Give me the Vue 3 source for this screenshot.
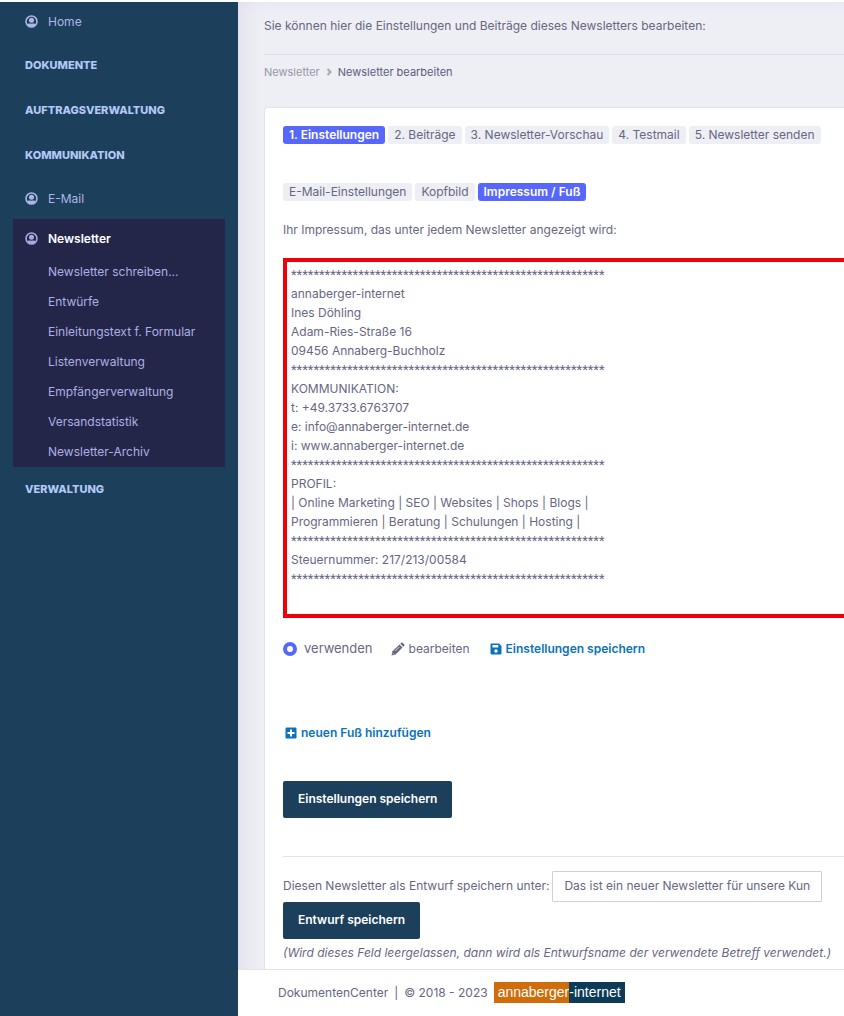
<template>
  <div class="page">
    <aside class="sidebar">
      <nav>
        <a href="#" class="nav-item home"><svg class="user-icon" viewBox="0 0 14 14"><circle cx="7" cy="7" r="5.9" /><circle cx="7" cy="5.6" r="2.7" /><path d="M2.4 10.2C4 8.7 5 9.4 7 9.4S10 8.7 11.6 10.2C9 13.6 5 13.6 2.4 10.2Z" /></svg>Home</a>
        <h4 v-for="title in sectionsTop" :key="title">{{ title }}</h4>
        <a href="#" class="nav-item"><svg class="user-icon" viewBox="0 0 14 14"><circle cx="7" cy="7" r="5.9" /><circle cx="7" cy="5.6" r="2.7" /><path d="M2.4 10.2C4 8.7 5 9.4 7 9.4S10 8.7 11.6 10.2C9 13.6 5 13.6 2.4 10.2Z" /></svg>E-Mail</a>
        <div class="nav-open">
          <a href="#" class="nav-item active"><svg class="user-icon" viewBox="0 0 14 14"><circle cx="7" cy="7" r="5.9" /><circle cx="7" cy="5.6" r="2.7" /><path d="M2.4 10.2C4 8.7 5 9.4 7 9.4S10 8.7 11.6 10.2C9 13.6 5 13.6 2.4 10.2Z" /></svg>Newsletter</a>
          <a v-for="item in subItems" :key="item" href="#" class="sub-item">{{ item }}</a>
        </div>
        <h4>VERWALTUNG</h4>
      </nav>
    </aside>

    <div class="content">
      <main>
        <p class="intro">Sie können hier die Einstellungen und Beiträge dieses Newsletters bearbeiten:</p>
        <div class="breadcrumb">
          <a href="#">Newsletter</a>
          <svg viewBox="0 0 6 8"><path d="M1.5 1L4.5 4L1.5 7" /></svg>
          <span>Newsletter bearbeiten</span>
        </div>

        <section class="card">
          <div class="tabs">
            <button v-for="(step, i) in steps" :key="step" :class="{ current: activeStep === i }" @click="activeStep = i">{{ step }}</button>
          </div>
          <div class="tabs tabs-sub">
            <button v-for="(tab, i) in tabs" :key="tab" :class="{ current: activeTab === i }" @click="activeTab = i">{{ tab }}</button>
          </div>

          <p class="hint">Ihr Impressum, das unter jedem Newsletter angezeigt wird:</p>

          <div class="imprint">
            <template v-for="(line, i) in imprint" :key="i">
              <div v-if="line === ''" class="stars">{{ stars }}</div>
              <div v-else>{{ line }}</div>
            </template>
          </div>

          <div class="actions">
            <label class="use"><input v-model="selected" type="radio" name="footer" value="default">verwenden</label>
            <a href="#" class="edit">
              <svg viewBox="0 0 14 14"><path d="M1.5 9.3L8.5 2.5L11.5 5.5L4.6 12.4L0.5 13.5Z" /><path d="M9.3 1.7L10.3 0.7Q11 0.2 11.6 0.7L13.3 2.4Q13.8 3 13.3 3.7L12.3 4.7Z" /><path class="cut" d="M4.2 9L8.4 4.8M1.8 11.2L2.8 12.2" /></svg>bearbeiten
            </a>
            <a href="#" class="link save">
              <svg viewBox="0 0 12 12"><path fill-rule="evenodd" d="M1.2 0.5H9L11.5 3V10.3Q11.5 11.5 10.3 11.5H1.7Q0.5 11.5 0.5 10.3V1.7Q0.5 0.5 1.2 0.5ZM2.5 2V4.6H8.3V2ZM6 6.3A1.7 1.7 0 1 0 6 9.7A1.7 1.7 0 1 0 6 6.3Z" /></svg>Einstellungen speichern
            </a>
          </div>

          <a href="#" class="link add">
            <svg viewBox="0 0 12 12"><path fill-rule="evenodd" d="M1.5 0.5H10.5Q11.5 0.5 11.5 1.5V10.5Q11.5 11.5 10.5 11.5H1.5Q0.5 11.5 0.5 10.5V1.5Q0.5 0.5 1.5 0.5ZM5 2.5V5H2.5V7H5V9.5H7V7H9.5V5H7V2.5Z" /></svg>neuen Fuß hinzufügen
          </a>

          <button class="btn">Einstellungen speichern</button>

          <hr>

          <div class="draft">
            <label for="draft">Diesen Newsletter als Entwurf speichern unter:</label>
            <input id="draft" v-model="draftName" type="text">
          </div>
          <button class="btn">Entwurf speichern</button>
          <p class="note">(Wird dieses Feld leergelassen, dann wird als Entwurfsname der verwendete Betreff verwendet.)</p>
        </section>
      </main>

      <footer>
        <span>DokumentenCenter</span><span>|</span><span>© 2018 - 2023</span>
        <a href="#" class="logo"><span>annaberger</span><span>-internet</span></a>
      </footer>
    </div>
  </div>
</template>

<script setup>
import { ref } from 'vue'

const sectionsTop = ['DOKUMENTE', 'AUFTRAGSVERWALTUNG', 'KOMMUNIKATION']
const subItems = [
  'Newsletter schreiben...',
  'Entwürfe',
  'Einleitungstext f. Formular',
  'Listenverwaltung',
  'Empfängerverwaltung',
  'Versandstatistik',
  'Newsletter-Archiv',
]

const steps = ['1. Einstellungen', '2. Beiträge', '3. Newsletter-Vorschau', '4. Testmail', '5. Newsletter senden']
const tabs = ['E-Mail-Einstellungen', 'Kopfbild', 'Impressum / Fuß']
const activeStep = ref(0)
const activeTab = ref(2)

// leere Zeile = Trennlinie aus Sternchen
const stars = '*'.repeat(56)
const imprint = [
  '',
  'annaberger-internet',
  'Ines Döhling',
  'Adam-Ries-Straße 16',
  '09456 Annaberg-Buchholz',
  '',
  'KOMMUNIKATION:',
  't: +49.3733.6763707',
  'e: info@annaberger-internet.de',
  'i: www.annaberger-internet.de',
  '',
  'PROFIL:',
  '| Online Marketing | SEO | Websites | Shops | Blogs |',
  'Programmieren | Beratung | Schulungen | Hosting |',
  '',
  'Steuernummer: 217/213/00584',
  '',
]

const selected = ref('default')
const draftName = ref('Das ist ein neuer Newsletter für unsere Kunden')
</script>

<style>
body {
  background: #fff;
  overflow-x: hidden;
}
</style>

<style scoped>
* {
  box-sizing: border-box;
}

.page {
  display: flex;
  min-height: 100vh;
  padding-top: 2px;
  font-family: Inter, "Open Sans", sans-serif;
  font-size: 12px;
  font-weight: 400;
  line-height: 19px;
  color: #67677f;
}

a {
  color: inherit;
  text-decoration: none;
}

p {
  margin: 0;
}

button,
input {
  font: inherit;
}

.sidebar {
  flex: 0 0 238px;
  padding: 0 13px;
  background: #1c3f5c;
  color: #adb6e6;
}

.nav-item {
  display: flex;
  align-items: center;
  gap: 10px;
  height: 40px;
  padding-left: 12px;
}

.home {
  height: 38px;
  margin-bottom: 3px;
}

.user-icon {
  width: 13px;
  height: 13px;
  fill: currentColor;
}

.user-icon circle:first-child {
  fill: none;
  stroke: currentColor;
  stroke-width: 1.7;
}

h4 {
  height: 45px;
  margin: 0;
  padding-left: 12px;
  font-size: 11px;
  font-weight: 800;
  line-height: 45px;
  color: #b3c8f5;
}

.nav-open {
  margin-top: 1px;
  background: #242649;
}

.nav-open .nav-item {
  height: 38px;
}

.nav-open .active {
  font-weight: 600;
  color: #fff;
}

.active svg {
  color: #a9a9dc;
}

.sub-item {
  display: block;
  height: 30px;
  padding-left: 35px;
  line-height: 30px;
  color: #adafe2;
}

.content {
  display: flex;
  flex: 1;
  flex-direction: column;
  min-width: 0;
}

main {
  display: flex;
  flex: 1;
  flex-direction: column;
  padding-left: 26px;
  background: #eeeef5;
  box-shadow: inset 16px 8px 20px -12px #e0deea;
}

.intro {
  height: 53px;
  padding-top: 14px;
  border-bottom: 1px solid #dcdcea;
}

.breadcrumb {
  display: flex;
  align-items: center;
  gap: 6px;
  height: 34px;
  font-size: 11px;
  color: #5c5c80;
}

.breadcrumb a {
  color: #9797ab;
}

.breadcrumb svg {
  width: 6px;
  height: 8px;
  fill: none;
  stroke: #a5a5b8;
  stroke-width: 2;
}

.card {
  flex: 1;
  margin-top: 18px;
  padding: 18px 0 6px 18px;
  border: solid #e2e2ee;
  border-width: 1px 0 0 1px;
  border-radius: 4px 0 0 0;
  background: #fff;
}

.tabs {
  display: flex;
  gap: 3px;
}

.tabs button {
  flex: none;
  height: 18px;
  padding: 0 6px;
  border: 0;
  border-radius: 3px;
  background: #eeeef5;
  color: #67677f;
  line-height: 18px;
}

.tabs button.current {
  background: #5867fb;
  color: #fff;
  font-weight: 600;
}

.tabs-sub {
  margin-top: 39px;
}

.hint {
  margin: 19px 0;
}

.imprint {
  height: 360px;
  padding: 3px 4px;
  border: 4px solid #f00008;
  border-right: 0;
}

.stars {
  font-family: Roboto, sans-serif;
  font-size: 13px;
}

.actions {
  display: flex;
  align-items: center;
  height: 19px;
  margin-top: 21px;
}

.use {
  display: flex;
  align-items: center;
  gap: 7px;
  font-size: 13px;
}

.use input {
  appearance: none;
  width: 14px;
  height: 14px;
  margin: 0;
  border: 4px solid #5867fb;
  border-radius: 50%;
  background: #fff;
}

.edit {
  display: flex;
  align-items: center;
  gap: 4px;
  margin-left: 18px;
}

.edit svg {
  width: 14px;
  height: 14px;
  fill: #67677f;
}

.edit .cut {
  fill: none;
  stroke: #fff;
  stroke-width: 0.7;
}

.link {
  display: flex;
  align-items: center;
  gap: 4px;
  font-weight: 600;
  color: #0b72bb;
}

.link svg {
  width: 12px;
  height: 12px;
  fill: currentColor;
}

.save {
  margin-left: 20px;
}

.add {
  width: fit-content;
  margin: 65px 0 39px 2px;
}

.btn {
  display: block;
  height: 37px;
  padding: 0 15px 2px;
  border: 0;
  border-radius: 2px;
  background: #1c3f5c;
  color: #fff;
  font-weight: 600;
}

hr {
  height: 1px;
  margin: 38px 0 14px;
  border: 0;
  background: #e2e2e8;
}

.draft {
  display: flex;
  align-items: center;
  gap: 3px;
}

.draft label {
  flex: none;
  padding-bottom: 3px;
}

.draft input {
  width: 270px;
  height: 31px;
  padding: 0 10px 2px 11px;
  border: 1px solid #d0d0dc;
  border-radius: 1px;
  background: #fff;
  color: #67677f;
}

.note {
  margin-top: 4px;
  font-style: italic;
  white-space: nowrap;
}

footer {
  display: flex;
  align-items: center;
  gap: 6px;
  height: 47px;
  padding: 0 0 2px 40px;
  border-top: 1px solid #e2e2ec;
  background: #fff;
}

.logo {
  display: flex;
  height: 21px;
  font-family: "Liberation Sans", Arial, sans-serif;
  font-size: 14px;
  line-height: 20px;
  color: #fff;
}

.logo span:first-child {
  padding-left: 4px;
  background: #d16c0a;
}

.logo span:last-child {
  padding-right: 4px;
  background: #0c3b57;
}
</style>
